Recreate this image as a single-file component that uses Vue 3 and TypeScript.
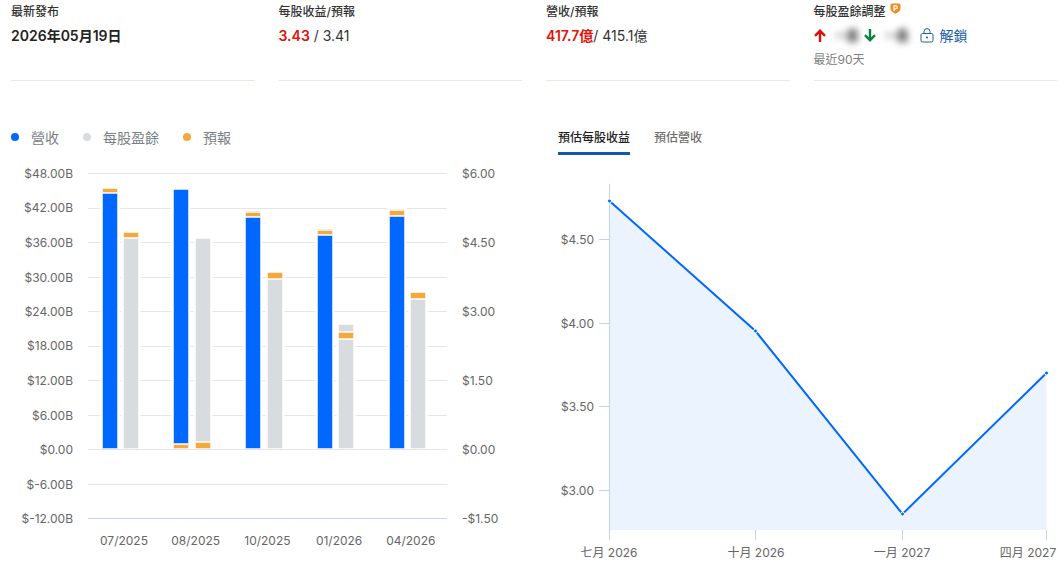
<script setup lang="ts">
interface Segment {
  y: number
  h: number
  color: string
}

interface Bar {
  x: number
  segments: Segment[]
}

const BLUE = '#0068ff'
const GREY = '#d9dcdf'
const ORANGE = '#f4a93f'

const leftLabels = ['$48.00B', '$42.00B', '$36.00B', '$30.00B', '$24.00B', '$18.00B', '$12.00B', '$6.00B', '$0.00', '$-6.00B', '$-12.00B']
const rightLabels = ['$6.00', '$4.50', '$3.00', '$1.50', '$0.00', '-$1.50']
const months = ['07/2025', '08/2025', '10/2025', '01/2026', '04/2026']

const gridY = (i: number) => Math.floor(173.5 + i * 34.5) + 0.5
// the axis labels snap a little differently from the grid lines
const labelY = [178, 212, 247, 282, 316, 350, 385, 420, 454, 489, 523]

const bars: Bar[] = [
  { x: 102.5, segments: [
    { y: 188.5, h: 4, color: ORANGE },
    { y: 193.5, h: 255, color: BLUE },
  ] },
  { x: 123.5, segments: [
    { y: 232.5, h: 5, color: ORANGE },
    { y: 238.5, h: 210, color: GREY },
  ] },
  { x: 173.5, segments: [
    { y: 189.5, h: 254, color: BLUE },
    { y: 444.5, h: 4, color: ORANGE },
  ] },
  { x: 195.5, segments: [
    { y: 238.5, h: 203, color: GREY },
    { y: 442.5, h: 6, color: ORANGE },
  ] },
  { x: 245.5, segments: [
    { y: 211, h: 1, color: GREY },
    { y: 212.5, h: 4, color: ORANGE },
    { y: 217.5, h: 231, color: BLUE },
  ] },
  { x: 267.5, segments: [
    { y: 272.5, h: 6, color: ORANGE },
    { y: 279.5, h: 169, color: GREY },
  ] },
  { x: 317.5, segments: [
    { y: 229, h: 1, color: GREY },
    { y: 230.5, h: 4, color: ORANGE },
    { y: 235.5, h: 213, color: BLUE },
  ] },
  { x: 338.5, segments: [
    { y: 324.5, h: 7, color: GREY },
    { y: 332.5, h: 6, color: ORANGE },
    { y: 339.5, h: 109, color: GREY },
  ] },
  { x: 389.5, segments: [
    { y: 209, h: 1, color: GREY },
    { y: 210.5, h: 5, color: ORANGE },
    { y: 216.5, h: 232, color: BLUE },
  ] },
  { x: 410.5, segments: [
    { y: 292.5, h: 6, color: ORANGE },
    { y: 299.5, h: 149, color: GREY },
  ] },
]

const barTop = (bar: Bar) => bar.segments[0].y
const barHeight = (bar: Bar) => {
  const last = bar.segments[bar.segments.length - 1]
  return last.y + last.h - bar.segments[0].y
}

const points: [number, number][] = [
  [609.5, 201],
  [755.5, 331],
  [902.5, 514],
  [1046.5, 373],
]
const linePath = points.map((p) => p.join(',')).join(' ')
const areaPath = `609.5,530 ${linePath} 1046.5,530`

const yTicks = [
  { label: '$4.50', y: 239.5 },
  { label: '$4.00', y: 323.5 },
  { label: '$3.50', y: 406.5 },
  { label: '$3.00', y: 490.5 },
]
const xTicks = [
  { label: '七月 2026', x: 609.5, tx: 609 },
  { label: '十月 2026', x: 755.5, tx: 756 },
  { label: '一月 2027', x: 902.5, tx: 902 },
  { label: '四月 2027', x: 1046.5, tx: 1028 },
]
</script>

<template>
  <div class="page">
    <section class="stats">
      <div class="stat">
        <div class="stat-title">最新發布</div>
        <div class="stat-value strong">2026年05月19日</div>
      </div>
      <div class="stat">
        <div class="stat-title">每股收益/預報</div>
        <div class="stat-value"><b class="beat">3.43</b> / 3.41</div>
      </div>
      <div class="stat">
        <div class="stat-title">營收/預報</div>
        <div class="stat-value"><b class="beat">417.7億</b>/ 415.1億</div>
      </div>
      <div class="stat">
        <div class="stat-title">
          每股盈餘調整
          <svg class="pro" width="11" height="11" viewBox="0 0 11 11">
            <path d="M2 .5h7A1.5 1.5 0 0 1 10.5 2v3.2c0 2.6-2.6 4.6-5 5.3-2.4-.7-5-2.7-5-5.3V2A1.5 1.5 0 0 1 2 .5z" fill="#f58a1f" />
            <path d="M4 8V2.8h1.8a1.5 1.5 0 0 1 0 3H4" fill="none" stroke="#fff" stroke-width="1.3" />
          </svg>
        </div>
        <div class="revisions">
          <svg class="arrow" width="12" height="13" viewBox="0 0 12 13">
            <path d="M6 13V2.2M1 6.8l5-5 5 5" fill="none" stroke="#d91009" stroke-width="2.4" />
          </svg>
          <span class="blurred">··8</span>
          <svg class="arrow" width="12" height="13" viewBox="0 0 12 13">
            <path d="M6 0v10.8M1 6.2l5 5 5-5" fill="none" stroke="#0b8043" stroke-width="2.4" />
          </svg>
          <span class="blurred second">··8</span>
          <span class="unlock">
            <svg width="14" height="15" viewBox="0 0 14 15">
              <rect x="1" y="5.5" width="12" height="8.5" rx="1.5" fill="none" stroke="#1a5ea8" />
              <path d="M4 5.5V3.6a3 3 0 0 1 6 0v1.9" fill="none" stroke="#1a5ea8" />
              <circle cx="7" cy="9.5" r="1" fill="#1a5ea8" />
            </svg>
            解鎖
          </span>
        </div>
        <div class="stat-note">最近90天</div>
      </div>
    </section>

    <section class="charts">
      <div class="bar-panel">
        <ul class="legend">
          <li><i class="dot blue"></i>營收</li>
          <li><i class="dot grey"></i>每股盈餘</li>
          <li><i class="dot orange"></i>預報</li>
        </ul>
        <svg class="chart" width="530" height="403" viewBox="0 160 530 403">
          <line
            v-for="(label, i) in leftLabels"
            :key="label"
            x1="88"
            x2="447"
            :y1="gridY(i)"
            :y2="gridY(i)"
            :stroke="i === leftLabels.length - 1 ? '#c5d2e8' : '#e6e6e6'"
          />
          <text v-for="(label, i) in leftLabels" :key="label" x="73" :y="labelY[i]" text-anchor="end">{{ label }}</text>
          <text v-for="(label, i) in rightLabels" :key="label" x="462" :y="labelY[i * 2]">{{ label }}</text>
          <text v-for="(month, i) in months" :key="month" :x="124 + i * 71.7" y="545" text-anchor="middle">{{ month }}</text>
          <g v-for="bar in bars" :key="bar.x">
            <!-- white halo that cuts the grid lines around a bar -->
            <rect :x="bar.x - 2" :y="barTop(bar) - 1" width="19" :height="barHeight(bar) + 1" fill="#fff" />
            <rect
              v-for="seg in bar.segments"
              :key="seg.y"
              :x="bar.x"
              :y="seg.y"
              width="15"
              :height="seg.h"
              :fill="seg.color"
              stroke="#fff"
              stroke-opacity="0.5"
            />
          </g>
        </svg>
      </div>

      <div class="line-panel">
        <div class="tabs">
          <span class="tab active">預估每股收益</span>
          <span class="tab">預估營收</span>
        </div>
        <svg class="chart" width="520" height="403" viewBox="540 160 520 403">
          <polygon :points="areaPath" fill="#ebf3ff" />
          <line x1="609.5" x2="609.5" y1="184" y2="540" stroke="#c5d2e8" />
          <g v-for="tick in yTicks" :key="tick.label">
            <line x1="599" x2="609" :y1="tick.y" :y2="tick.y" stroke="#c5d2e8" />
            <text x="594" :y="tick.y + 4.5" text-anchor="end">{{ tick.label }}</text>
          </g>
          <g v-for="tick in xTicks" :key="tick.label">
            <line :x1="tick.x" :x2="tick.x" y1="530" y2="540" stroke="#c5d2e8" />
            <text :x="tick.tx" y="557" text-anchor="middle">{{ tick.label }}</text>
          </g>
          <polyline :points="linePath" fill="none" stroke="#0068ff" stroke-width="2" />
          <circle v-for="p in points" :key="p[0]" :cx="p[0]" :cy="p[1]" r="2" fill="#0068ff" stroke="#fff" stroke-width="1" />
        </svg>
      </div>
    </section>
  </div>
</template>

<style scoped>
.page {
  width: 1060px;
  height: 563px;
  overflow: hidden;
  box-sizing: border-box;
  padding: 0 3px 0 11px;
  font-family: Inter, "Noto Sans CJK TC", sans-serif;
  color: #333;
  background: #fff;
}

.stats {
  display: grid;
  grid-template-columns: repeat(4, 1fr);
  gap: 24px;
  height: 81px;
}

.stat {
  position: relative;
  box-sizing: border-box;
  border-bottom: 1px solid #e3e9f2;
  padding-top: 4px;
}

.stat-title {
  font-size: 12px;
  line-height: 16px;
  font-weight: 500;
  color: #333;
}

.pro {
  position: absolute;
  top: 3px;
  left: 76px;
}

.stat-value {
  margin-top: 6px;
  font-size: 14px;
  line-height: 20px;
  color: #333;
}

.stat-value.strong {
  font-weight: 600;
  color: #222;
}

.beat {
  font-weight: 600;
  color: #e01409;
}

.revisions {
  display: flex;
  align-items: center;
  margin-top: 5px;
  height: 20px;
  font-size: 14px;
}

.arrow {
  flex-shrink: 0;
}

.blurred {
  box-sizing: border-box;
  width: 38px;
  padding-right: 5px;
  text-align: right;
  font-size: 18px;
  font-weight: 700;
  color: #222;
  filter: blur(3.5px);
}

.blurred.second {
  width: 44px;
  padding-right: 11px;
}

.unlock {
  display: flex;
  align-items: center;
  gap: 6px;
  color: #1a5ea8;
}

.stat-note {
  margin-top: 7px;
  font-size: 12px;
  line-height: 16px;
  color: #808080;
}

.charts {
  display: flex;
}

.bar-panel {
  width: 535px;
  margin-left: -11px;
  flex-shrink: 0;
}

.legend {
  display: flex;
  align-items: center;
  height: 24px;
  margin: 44px 0 11px;
  padding: 0 0 0 11px;
  list-style: none;
  font-size: 14px;
  color: #7b7f87;
}

.legend li {
  display: flex;
  align-items: center;
  gap: 12px;
  margin-right: 24px;
}

.dot {
  width: 8px;
  height: 8px;
  border-radius: 50%;
}

.dot.blue {
  background: #0068ff;
}

.dot.grey {
  background: #d9dcdf;
}

.dot.orange {
  background: #f4a93f;
}

.chart {
  display: block;
  font-size: 12px;
  fill: #666;
}

.line-panel {
  width: 520px;
  margin-left: 5px;
  flex-shrink: 0;
}

.tabs {
  display: flex;
  gap: 24px;
  height: 34px;
  margin: 38px 0 7px;
  padding-left: 18px;
  box-sizing: border-box;
  font-size: 12px;
}

.tab {
  box-sizing: border-box;
  height: 36px;
  padding-top: 11px;
  line-height: 16px;
  font-weight: 500;
  color: #707070;
}

.tab.active {
  font-weight: 500;
  color: #222;
  border-bottom: 3px solid #0f5aa6;
}
</style>

<style>
body {
  margin: 0;
  overflow: hidden;
}
</style>
